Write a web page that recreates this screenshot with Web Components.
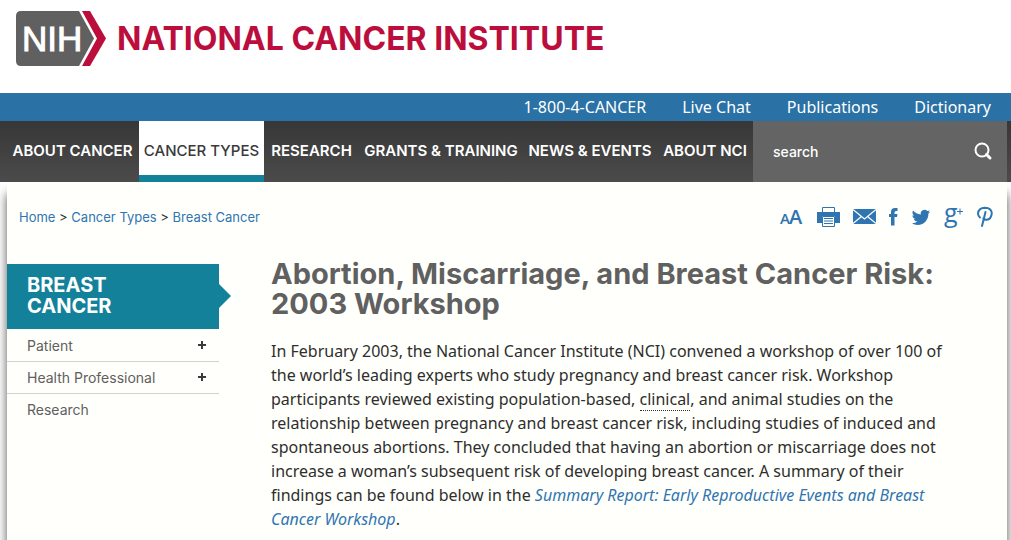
<!DOCTYPE html>
<html lang="en">
<head>
<meta charset="utf-8">
<meta name="viewport" content="width=device-width, initial-scale=1">
<title>Abortion, Miscarriage, and Breast Cancer Risk - National Cancer Institute</title>
<style>
  :root {
    --display: Inter, "Open Sans", sans-serif;
    --body: "Noto Sans", "Open Sans", sans-serif;
    --blue: #2a71a5;
    --link: #2f75b1;
    --teal: #14819a;
    --red: #bb0e3d;
    --grey: #606060;
    --paper: #fffffb;
  }
  body { margin: 0; background: #fff; font-family: var(--body); color: #2e2e2e; }
</style>
</head>
<body>
<nci-page>
  <nci-logo slot="brand"></nci-logo>
  <nci-utility-bar slot="utility">
    <a href="#phone">1-800-4-CANCER</a>
    <a href="#chat">Live Chat</a>
    <a href="#publications">Publications</a>
    <a href="#dictionary">Dictionary</a>
  </nci-utility-bar>
  <nci-main-nav slot="nav"></nci-main-nav>
  <nci-breadcrumb slot="trail">
    <a href="#home">Home</a> &gt; <a href="#types">Cancer Types</a> &gt; <a href="#breast">Breast Cancer</a>
  </nci-breadcrumb>
  <nci-share slot="share"></nci-share>
  <nci-section-nav slot="side">
    <span slot="title">Breast Cancer</span>
    <nci-section-item expandable>Patient</nci-section-item>
    <nci-section-item expandable>Health Professional</nci-section-item>
    <nci-section-item>Research</nci-section-item>
  </nci-section-nav>
  <nci-article></nci-article>
</nci-page>

<script>
const define = (name, html) => {
  const template = document.createElement('template');
  template.innerHTML = html;
  customElements.define(name, class extends HTMLElement {
    constructor() {
      super();
      this.attachShadow({ mode: 'open' }).append(template.content.cloneNode(true));
    }
  });
};

define('nci-page', `
  <style>
    :host { display: flex; flex-direction: column; min-height: 100vh; overflow: hidden; }
    .brand { height: 93px; }
    .masthead { position: relative; z-index: 1; }
    main { flex: 1; margin: 0 4px 0 7px; background: var(--paper); box-shadow: 0 12px 10px #555; }
    .tools { display: flex; justify-content: space-between; align-items: center;
             padding: 22px 14px 0 12px; height: 26px; }
    .columns { display: grid; grid-template-columns: 212px minmax(0, 1fr); column-gap: 52px;
               align-items: start; padding: 34px 56px 8px 0; }
  </style>
  <header class="masthead">
    <div class="brand"><slot name="brand"></slot></div>
    <slot name="utility"></slot>
    <slot name="nav"></slot>
  </header>
  <main>
    <div class="tools"><slot name="trail"></slot><slot name="share"></slot></div>
    <div class="columns"><slot name="side"></slot><slot></slot></div>
  </main>`);

define('nci-logo', `
  <style>
    :host { display: block; }
    a { display: flex; align-items: center; gap: 10px; padding: 10px 0 0 15px; text-decoration: none;
        color: var(--red); font: 700 32px/56px var(--display); white-space: nowrap; }
    svg { flex: none; }
  </style>
  <a href="#home">
    <svg width="92" height="58" viewBox="0 0 92 58" aria-hidden="true">
      <path d="M6 1H64L79 28.500L64 56H6Q1 56 1 51V6Q1 1 6 1Z" fill="#606060"/>
      <path d="M67 1H75L91 28.500L75 56H67L82 28.500Z" fill="#bb0e3d"/>
      <text x="7" y="41" font-family="Liberation Sans, sans-serif" font-size="35" font-weight="400" fill="#fff" stroke="#fff" stroke-width="1">NIH</text>
    </svg>
    <span>NATIONAL CANCER INSTITUTE</span>
  </a>`);

define('nci-utility-bar', `
  <style>
    :host { display: flex; justify-content: flex-end; gap: 36px; padding: 0 20px; height: 28px;
            background: var(--blue); font: 16px/28px var(--body); }
    ::slotted(a) { color: #fff; text-decoration: none; }
  </style>
  <slot></slot>`);

define('nci-main-nav', `
  <style>
    :host { display: block; padding: 0 4px 0 6px; background: linear-gradient(#373737, #4b4b4b); }
    nav { display: grid; grid-template-rows: 61px;
          grid-template-columns: 133fr 125fr 95fr 164fr 134fr 96fr minmax(0, 254fr); }
    a { display: block; box-sizing: border-box; height: 61px; color: #fff; text-align: center; text-decoration: none;
        font: 600 15px/60px var(--display); white-space: nowrap; }
    a[aria-current] { background: #fff; color: #3a3a3a; font-weight: 500; border-bottom: 7px solid var(--teal); }
  </style>
  <nav aria-label="Main">
    <a href="#about">ABOUT CANCER</a>
    <a href="#types" aria-current="page">CANCER TYPES</a>
    <a href="#research">RESEARCH</a>
    <a href="#grants">GRANTS &amp; TRAINING</a>
    <a href="#news">NEWS &amp; EVENTS</a>
    <a href="#nci">ABOUT NCI</a>
    <nci-search></nci-search>
  </nav>`);

define('nci-search', `
  <style>
    :host { display: block; background: #646464; }
    form { display: flex; align-items: center; height: 100%; padding: 0 14px 0 20px; box-sizing: border-box; }
    input { flex: 1; min-width: 0; padding: 0; border: 0; outline: 0; background: none; color: #fff;
            font: 500 14px/20px var(--display); }
    input::placeholder { color: #fff; opacity: 1; }
    button { display: flex; padding: 0; border: 0; background: none; }
  </style>
  <form role="search">
    <input type="text" placeholder="search" aria-label="search">
    <button type="button" aria-label="Submit search">
      <svg width="20" height="20" viewBox="0 0 20 20" fill="none" stroke="#fff">
        <circle cx="9" cy="8" r="6.500" stroke-width="2"/>
        <path d="M13.500 12.500L17 16" stroke-width="3" stroke-linecap="round"/>
      </svg>
    </button>
  </form>`);

define('nci-breadcrumb', `
  <style>
    :host { display: block; font: 400 13px/24px var(--display); white-space: nowrap; }
    ::slotted(a) { color: var(--link); text-decoration: none; }
  </style>
  <nav aria-label="Breadcrumb"><slot></slot></nav>`);

define('nci-share', `
  <style>
    :host { display: flex; align-items: center; gap: 13px; color: var(--link); }
    button, a { display: flex; padding: 0; border: 0; background: none; color: inherit; }
    svg { display: block; fill: currentColor; overflow: visible; }
  </style>
  <button type="button" aria-label="Text size">
    <svg width="24" height="24" viewBox="0 0 24 24" font-family="Open Sans, sans-serif" font-weight="600">
      <text x="0" y="19" font-size="15">A</text><text x="9" y="19" font-size="20">A</text>
    </svg>
  </button>
  <button type="button" aria-label="Print">
    <svg width="23" height="24" viewBox="0 0 23 24">
      <path d="M5.500 7V2.500H17.500V7" fill="none" stroke="currentColor"/>
      <path d="M0 7H23V18H18V11H5V18H0Z"/>
      <path d="M5.500 11.500H17.500V21.500H5.500Z" fill="none" stroke="currentColor"/>
      <path d="M7 13.500H16M7 16H16M7 18.500H16" stroke="currentColor"/>
    </svg>
  </button>
  <a href="#email" aria-label="Email">
    <svg width="23" height="24" viewBox="0 0 23 24">
      <path d="M0 4H23V19H0Z"/>
      <path d="M0 4.500L11.500 14L23 4.500M0 18.500L8.500 11.500M23 18.500L14.500 11.500" fill="none" stroke="#fffffb" stroke-width="1.200"/>
    </svg>
  </a>
  <a href="#facebook" aria-label="Facebook">
    <svg width="9" height="24" viewBox="0 0 9 24">
      <path d="M2 20.500V12H0V9H2V7Q2 3 6 3H8.500V6H7Q5.500 6 5.500 7.500V9H8.500L8 12H5.500V20.500Z"/>
    </svg>
  </a>
  <a href="#twitter" aria-label="Twitter">
    <svg width="20" height="24" viewBox="-1 -4 26 31">
      <path d="M23.953 4.570a10 10 0 0 1-2.825.775 4.958 4.958 0 0 0 2.163-2.723 9.900 9.900 0 0 1-3.127 1.184 4.920 4.920 0 0 0-8.384 4.482C7.690 8.095 4.067 6.130 1.640 3.162a4.822 4.822 0 0 0-.666 2.475c0 1.710.870 3.213 2.188 4.096a4.904 4.904 0 0 1-2.228-.616v.060a4.923 4.923 0 0 0 3.946 4.827 4.996 4.996 0 0 1-2.212.085 4.936 4.936 0 0 0 4.604 3.417 9.867 9.867 0 0 1-6.102 2.105c-.390 0-.779-.023-1.170-.067a13.995 13.995 0 0 0 7.557 2.209c9.053 0 13.998-7.496 13.998-13.985 0-.210 0-.420-.015-.630a9.935 9.935 0 0 0 2.460-2.548z"/>
    </svg>
  </a>
  <a href="#google" aria-label="Google Plus">
    <svg width="20" height="24" viewBox="0 0 20 24">
      <text x="0" y="17" font-family="Open Sans, sans-serif" font-size="25">g</text>
      <path d="M13 6.500H19M16 3.500V9.500" stroke="currentColor"/>
    </svg>
  </a>
  <a href="#pinterest" aria-label="Pinterest">
    <svg width="16" height="24" viewBox="0 0 16 24" fill="none">
      <path d="M3 12.500Q1 11 1 8.500Q1.500 3 8 2.800Q14.500 3 14.800 8.200Q14.300 14.500 9.500 14.800Q7.500 14.800 6.300 13.200M8.500 7L5 21" fill="none" stroke="currentColor" stroke-width="2" stroke-linecap="round"/>
    </svg>
  </a>`);

define('nci-section-nav', `
  <style>
    :host { display: block; }
    h2 { position: relative; margin: 0 0 1px; padding: 11px 90px 12px 20px; background: var(--teal); color: #fff;
         font: 700 20px/21px var(--display); text-transform: uppercase; }
    h2::after { content: ""; position: absolute; left: 100%; top: 20px;
                border: 12px solid transparent; border-right-width: 0; border-left-color: var(--teal); }
  </style>
  <nav aria-label="Section">
    <h2><slot name="title"></slot></h2>
    <slot></slot>
  </nav>`);

define('nci-section-item', `
  <style>
    :host { display: flex; justify-content: space-between; height: 31px; padding: 0 12px 0 20px;
            color: #606060; font: 400 14px/32px var(--display); border-bottom: 1px solid #d2d2d0; }
    :host(:last-of-type) { border-bottom: 0; }
    a { color: inherit; text-decoration: none; }
    button { display: none; padding: 0; border: 0; background: none; color: #3a3a3a; height: 29px; align-items: center; }
    :host([expandable]) button { display: flex; }
  </style>
  <a href="#section"><slot></slot></a>
  <button type="button" aria-label="Expand">
    <svg width="10" height="10" viewBox="0 0 10 10"><path d="M1 5H9M5 1V9" stroke="currentColor" stroke-width="2"/></svg>
  </button>`);

define('nci-article', `
  <style>
    :host { display: block; }
    h1 { margin: -5px 0 20px; color: var(--grey); font: 700 29px/30px var(--display); }
    p { margin: 0; font: 16px/24px var(--body); }
    p a { color: var(--link); text-decoration: none; font-style: italic; }
    p a.term { color: inherit; font-style: normal; border-bottom: 1px dotted #2e2e2e; }
  </style>
  <article>
    <h1>Abortion, Miscarriage, and Breast Cancer Risk: 2003 Workshop</h1>
    <p>In February 2003, the National Cancer Institute (NCI) convened a workshop of over 100 of the world’s leading experts who study pregnancy and breast cancer risk. Workshop participants reviewed existing population-based, <a class="term" href="#clinical">clinical</a>, and animal studies on the relationship between pregnancy and breast cancer risk, including studies of induced and spontaneous abortions. They concluded that having an abortion or miscarriage does not increase a woman’s subsequent risk of developing breast cancer. A summary of their findings can be found below in the <a href="#report">Summary Report: Early Reproductive Events and Breast Cancer Workshop</a>.</p>
  </article>`);
</script>
</body>
</html>
